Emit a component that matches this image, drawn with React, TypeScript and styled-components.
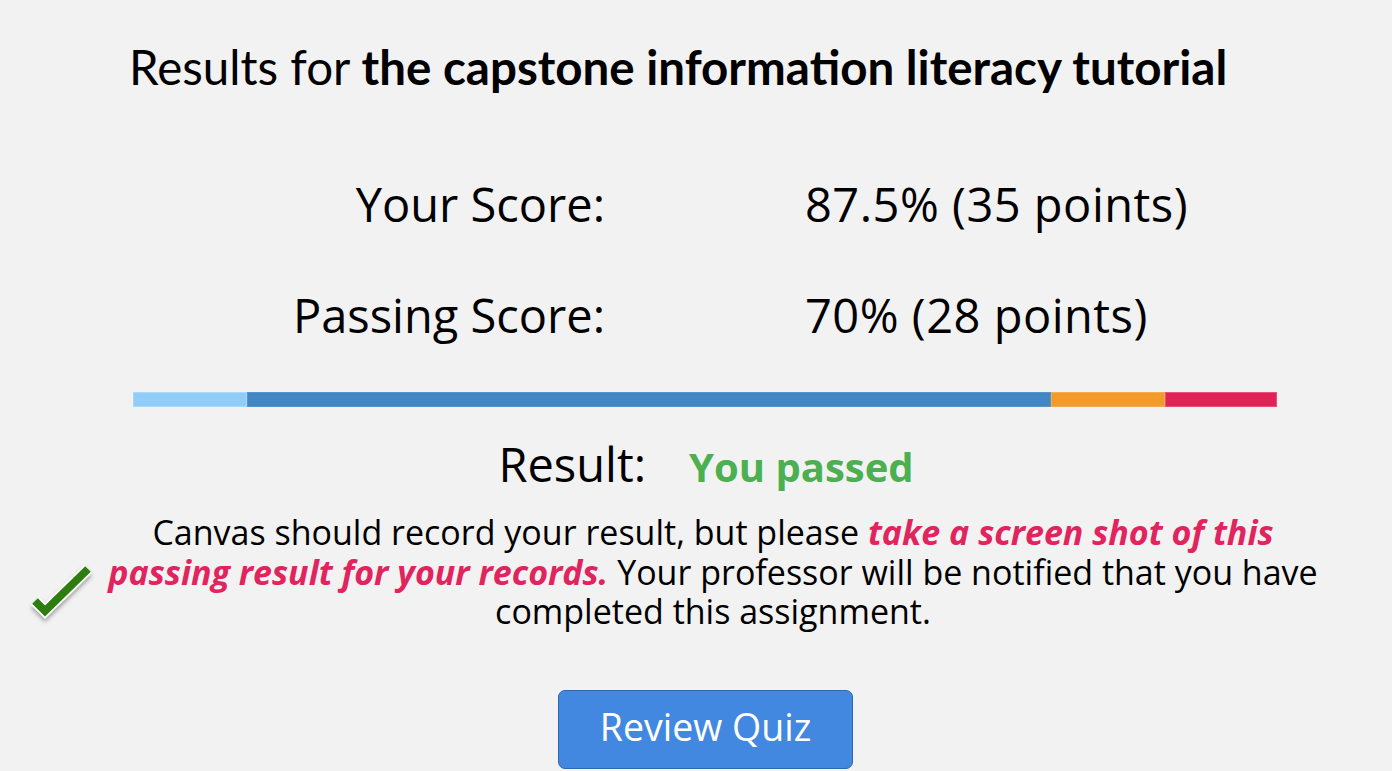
import React from "react";
import styled, { createGlobalStyle } from "styled-components";

const GlobalStyle = createGlobalStyle`
  html, body {
    margin: 0;
    padding: 0;
    background: #f2f2f2;
  }
  body {
    font-family: "Open Sans", "Noto Sans", sans-serif;
    color: #000;
  }
`;

const Page = styled.div`
  width: 1392px;
  height: 771px;
  overflow: hidden;
  background: #f2f2f2;
  display: flex;
  flex-direction: column;
`;

const Main = styled.div`
  width: 1144px;
  margin-left: 133px;
  display: flex;
  flex-direction: column;
`;

const Heading = styled.h1`
  margin: 39px 0 0 -4px;
  font-family: Lato, "Open Sans", sans-serif;
  font-weight: 400;
  font-size: 47.5px;
  line-height: 56px;
  white-space: nowrap;
`;

const Strong = styled.strong`
  font-weight: 700;
`;

const ScoreGrid = styled.div`
  display: grid;
  grid-template-columns: 472px 1fr;
  column-gap: 200px;
  row-gap: 51px;
  margin-top: 79px;
  font-size: 47px;
  line-height: 60px;
`;

const Label = styled.div`
  text-align: right;
  white-space: nowrap;
`;

const Value = styled.div`
  text-align: left;
  white-space: nowrap;
  letter-spacing: 0.5px;
`;

const Bar = styled.div`
  display: flex;
  height: 15px;
  margin-top: 47px;
`;

const Segment = styled.div<{ $color: string; $edge: string; $grow: number }>`
  flex: ${(p) => p.$grow} 0 0;
  background: ${(p) => p.$color};
  box-shadow: inset 0 0 0 1px ${(p) => p.$edge};
`;

const ResultRow = styled.div`
  display: flex;
  justify-content: center;
  align-items: baseline;
  gap: 43px;
  margin-top: 27px;
  font-size: 47px;
  line-height: 60px;
  padding-left: 2px;
`;

const Passed = styled.span`
  color: #4caf50;
  font-weight: 700;
  font-size: 40px;
`;

const NoticeRow = styled.div`
  display: grid;
  grid-template-columns: 66px 1226px;
  column-gap: 6px;
  padding-left: 28px;
  margin-top: 16px;
`;

const CheckIcon = styled.svg`
  align-self: start;
  margin-top: 48px;
  width: 66px;
  height: 62px;
  overflow: visible;
`;

const Notice = styled.p`
  margin: 0;
  text-align: center;
  font-size: 34px;
  line-height: 39.5px;
  white-space: nowrap;
`;

const Emph = styled.em`
  color: #e0245e;
  font-weight: 700;
  font-style: italic;
`;

const ButtonRow = styled.div`
  display: flex;
  justify-content: center;
  margin-top: 58px;
  padding-left: 19px;
`;

const ReviewButton = styled.button`
  width: 295px;
  height: 79px;
  background: #4388e0;
  border: 1.5px solid #2f66ad;
  border-radius: 7px;
  color: #fff;
  font-family: "Open Sans", "Noto Sans", sans-serif;
  font-size: 37.5px;
  line-height: 1;
  padding: 0 0 4px;
  cursor: pointer;
`;

export default function App() {
  return (
    <Page>
      <GlobalStyle />
      <Main>
        <Heading>
          Results for <Strong>the capstone information literacy tutorial</Strong>
        </Heading>
        <ScoreGrid>
          <Label>Your Score:</Label>
          <Value>87.5% (35 points)</Value>
          <Label>Passing Score:</Label>
          <Value>70% (28 points)</Value>
        </ScoreGrid>
        <Bar>
          <Segment $grow={114} $color="#90cdf9" $edge="#a9d8f9" />
          <Segment $grow={804} $color="#4286c4" $edge="#5a93c9" />
          <Segment $grow={114} $color="#f39b2a" $edge="#f2ac58" />
          <Segment $grow={112} $color="#e02256" $edge="#e5527a" />
        </Bar>
        <ResultRow>
          <span>Result:</span>
          <Passed>You passed</Passed>
        </ResultRow>
      </Main>
      <NoticeRow>
        <CheckIcon viewBox="0 0 66 62">
          <defs>
            <filter id="chkShadow" x="-30%" y="-30%" width="160%" height="170%">
              <feDropShadow dx="0" dy="3" stdDeviation="2" floodColor="#000" floodOpacity="0.35" />
            </filter>
          </defs>
          <g filter="url(#chkShadow)">
            <polyline
              points="7,40 17,50 60,8"
              fill="none"
              stroke="#ffffff"
              strokeWidth="11"
              strokeLinejoin="miter"
            />
          </g>
          <polyline
            points="7,40 17,50 60,8"
            fill="none"
            stroke="#2e7d10"
            strokeWidth="8"
            strokeLinejoin="miter"
          />
        </CheckIcon>
        <Notice>
          Canvas should record your result, but please <Emph>take a screen shot of this</Emph>
          <br />
          <Emph>passing result for your records.</Emph> Your professor will be notified that you have
          <br />
          completed this assignment.
        </Notice>
      </NoticeRow>
      <ButtonRow>
        <ReviewButton>Review Quiz</ReviewButton>
      </ButtonRow>
    </Page>
  );
}
